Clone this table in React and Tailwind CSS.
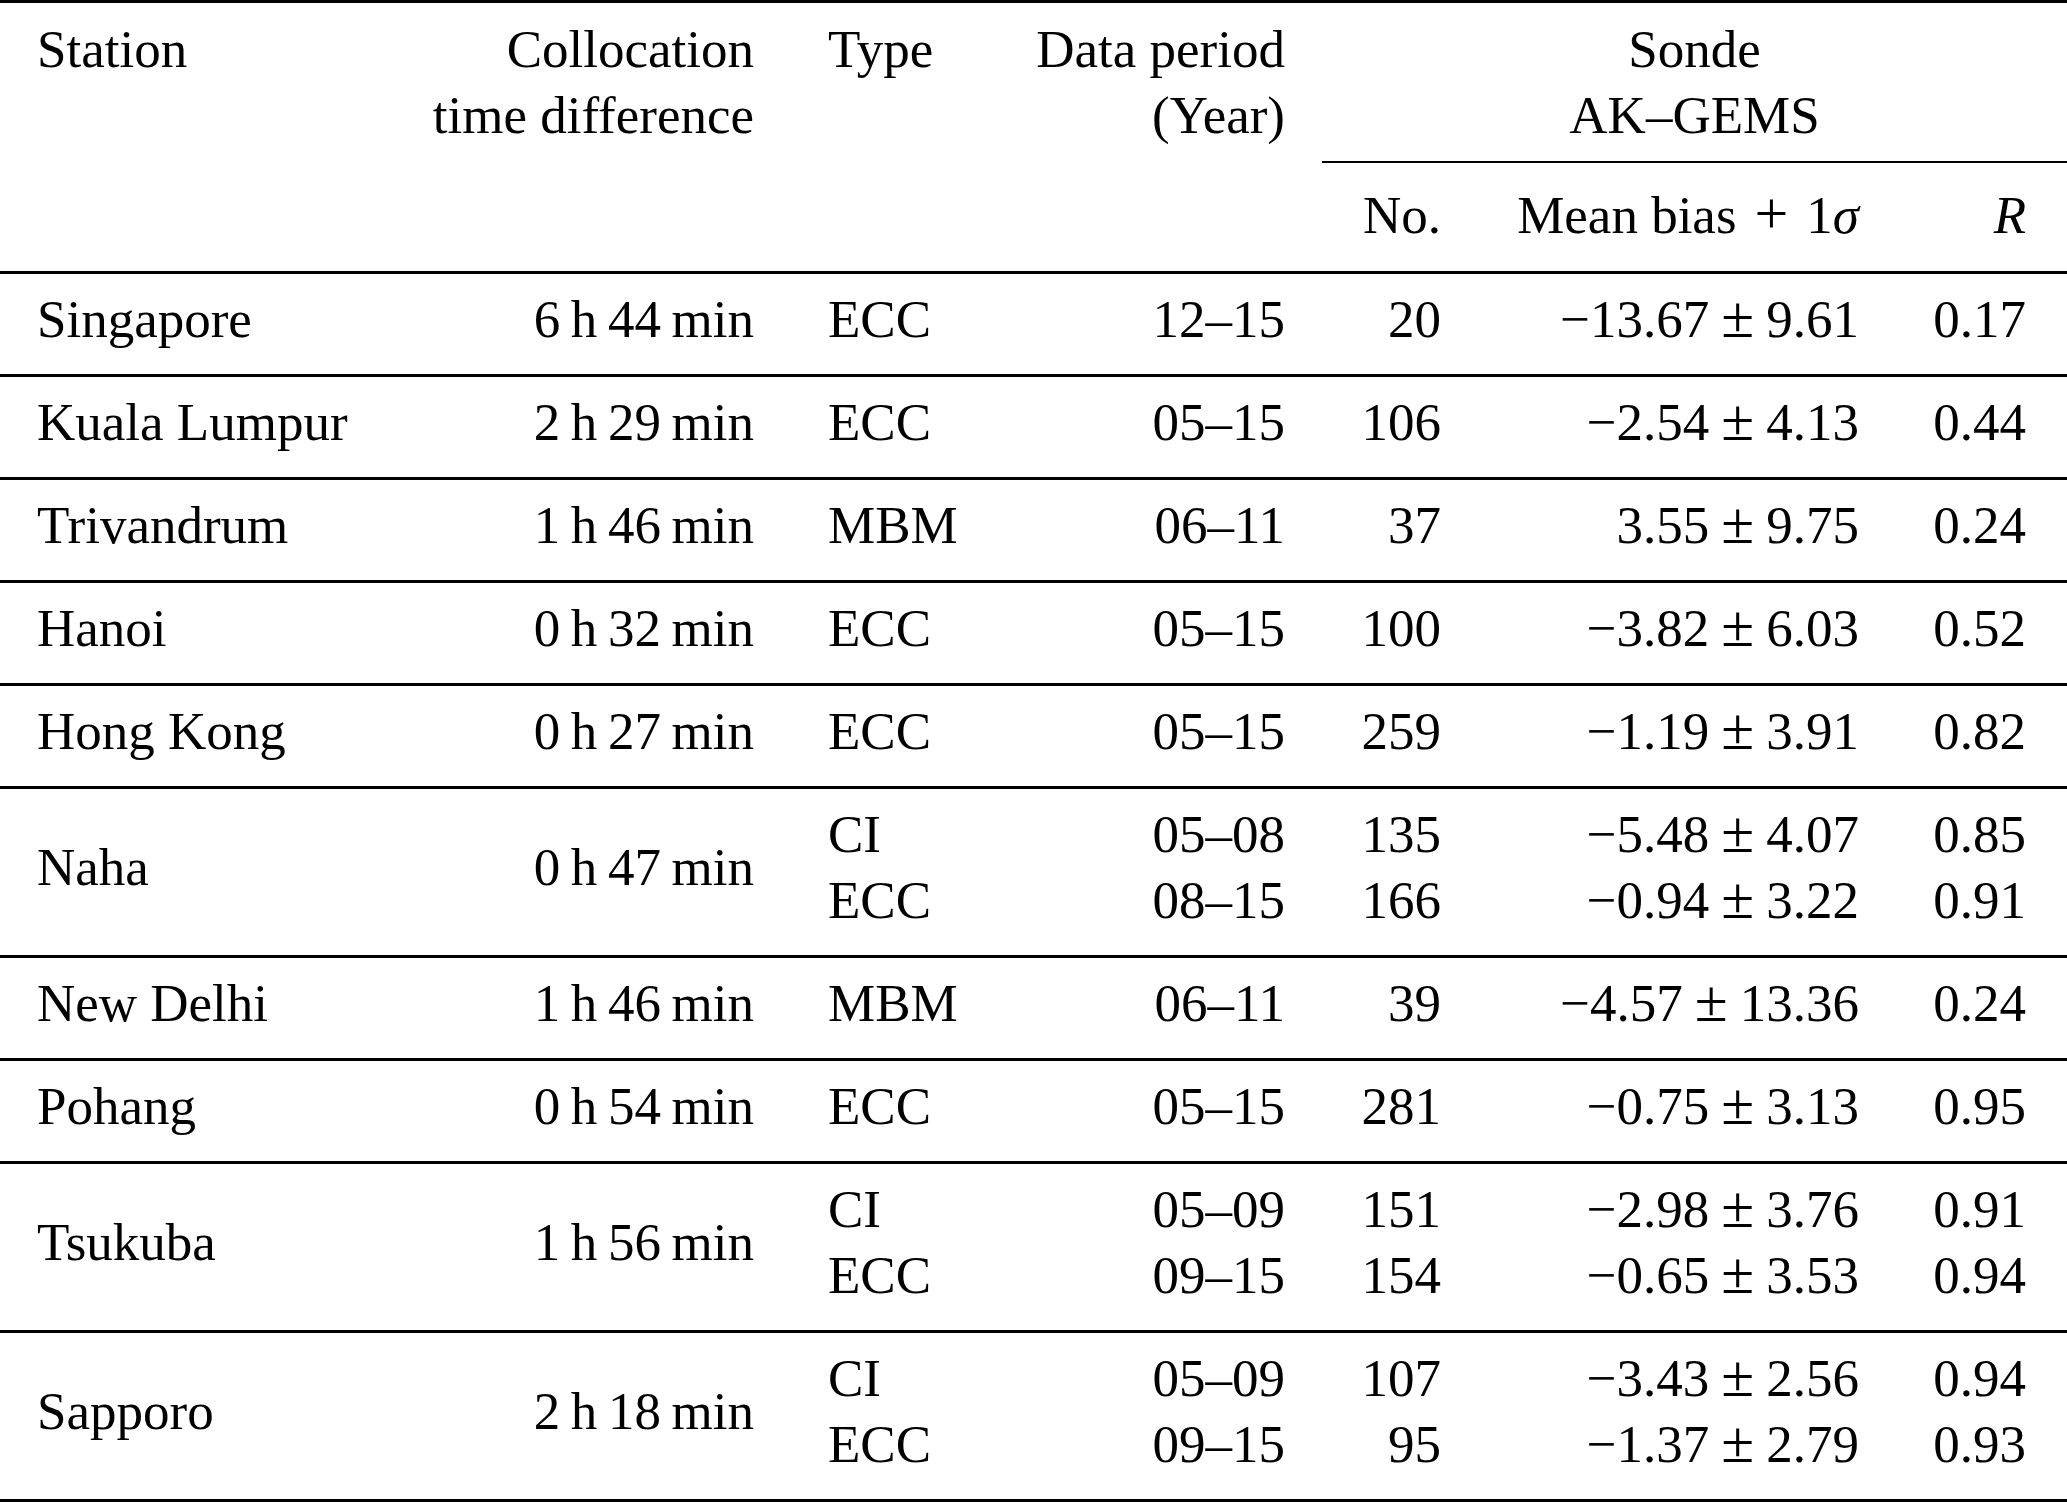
const stations = [
  { name: 'Singapore', diff: ['6', '44'], sub: [['ECC', '12–15', '20', '−13.67', '9.61', '0.17']] },
  { name: 'Kuala Lumpur', diff: ['2', '29'], sub: [['ECC', '05–15', '106', '−2.54', '4.13', '0.44']] },
  { name: 'Trivandrum', diff: ['1', '46'], sub: [['MBM', '06–11', '37', '3.55', '9.75', '0.24']] },
  { name: 'Hanoi', diff: ['0', '32'], sub: [['ECC', '05–15', '100', '−3.82', '6.03', '0.52']] },
  { name: 'Hong Kong', diff: ['0', '27'], sub: [['ECC', '05–15', '259', '−1.19', '3.91', '0.82']] },
  {
    name: 'Naha',
    diff: ['0', '47'],
    sub: [
      ['CI', '05–08', '135', '−5.48', '4.07', '0.85'],
      ['ECC', '08–15', '166', '−0.94', '3.22', '0.91'],
    ],
  },
  { name: 'New Delhi', diff: ['1', '46'], sub: [['MBM', '06–11', '39', '−4.57', '13.36', '0.24']] },
  { name: 'Pohang', diff: ['0', '54'], sub: [['ECC', '05–15', '281', '−0.75', '3.13', '0.95']] },
  {
    name: 'Tsukuba',
    diff: ['1', '56'],
    sub: [
      ['CI', '05–09', '151', '−2.98', '3.76', '0.91'],
      ['ECC', '09–15', '154', '−0.65', '3.53', '0.94'],
    ],
  },
  {
    name: 'Sapporo',
    diff: ['2', '18'],
    sub: [
      ['CI', '05–09', '107', '−3.43', '2.56', '0.94'],
      ['ECC', '09–15', '95', '−1.37', '2.79', '0.93'],
    ],
  },
]

// thin space like LaTeX \,
const TimeDiff = ({ h, m }) => (
  <span>
    {h}
    <span className="ml-[0.2em]">h</span>
    <span className="ml-[0.2em]">{m}</span>
    <span className="ml-[0.2em]">min</span>
  </span>
)

const Bias = ({ mean, sd }) => (
  <span>
    {mean}
    <span className="mx-[0.2em] text-[60px] leading-[0]">±</span>
    {sd}
  </span>
)

const App = () => {
  return (
    <div className="w-[2067px] min-h-[1504px] bg-white text-black font-['Liberation_Serif','Times_New_Roman',serif] text-[53px] leading-[66px]">
      <table className="w-[2067px] table-fixed border-separate border-spacing-0">
        <colgroup>
          <col className="w-[389px]" />
          <col className="w-[402px]" />
          <col className="w-[204px]" />
          <col className="w-[327px]" />
          <col className="w-[156px]" />
          <col className="w-[418px]" />
          <col className="w-[171px]" />
        </colgroup>
        <thead>
          <tr>
            <th rowSpan={2} className="font-normal text-left align-top pl-[37px] pt-[13px] border-t-[3px] border-b-[3px] border-black">
              Station
            </th>
            <th rowSpan={2} className="font-normal text-right align-top pr-[37px] pt-[13px] border-t-[3px] border-b-[3px] border-black whitespace-nowrap">
              Collocation
              <br />
              time difference
            </th>
            <th rowSpan={2} className="font-normal text-left align-top pl-[37px] pt-[13px] border-t-[3px] border-b-[3px] border-black">
              Type
            </th>
            <th rowSpan={2} className="font-normal text-right align-top pr-[37px] pt-[13px] border-t-[3px] border-b-[3px] border-black whitespace-nowrap">
              Data period
              <br />
              (Year)
            </th>
            <th colSpan={3} className="font-normal text-center align-top pt-[13px] pb-[13px] border-t-[3px] border-b-2 border-black">
              Sonde
              <br />
              AK–GEMS
            </th>
          </tr>
          <tr>
            <th className="font-normal text-right pr-[37px] pt-[19px] pb-[23px] border-b-[3px] border-black">No.</th>
            <th className="font-normal text-right pr-[37px] pt-[19px] pb-[23px] border-b-[3px] border-black whitespace-nowrap">
              Mean bias<span className="mx-[0.3em] text-[60px] leading-[0]">+</span>1<span className="italic">σ</span>
            </th>
            <th className="font-normal italic text-right pr-[41px] pt-[19px] pb-[23px] border-b-[3px] border-black">R</th>
          </tr>
        </thead>
        <tbody>
          {stations.map((s, i) => {
            const edge =
              (i > 0 ? ' border-t-[3px]' : '') + (i === stations.length - 1 ? ' border-b-[3px]' : '')
            const cell = 'pt-[12px] pb-[22px] align-middle border-black whitespace-nowrap' + edge
            return (
              <tr key={s.name}>
                <td className={cell + ' text-left pl-[37px]'}>{s.name}</td>
                <td className={cell + ' text-right pr-[37px]'}>
                  <TimeDiff h={s.diff[0]} m={s.diff[1]} />
                </td>
                <td className={cell + ' text-left pl-[37px]'}>
                  {s.sub.map((r) => (
                    <div key={r[0]}>{r[0]}</div>
                  ))}
                </td>
                <td className={cell + ' text-right pr-[37px]'}>
                  {s.sub.map((r) => (
                    <div key={r[0]}>{r[1]}</div>
                  ))}
                </td>
                <td className={cell + ' text-right pr-[37px]'}>
                  {s.sub.map((r) => (
                    <div key={r[0]}>{r[2]}</div>
                  ))}
                </td>
                <td className={cell + ' text-right pr-[37px]'}>
                  {s.sub.map((r) => (
                    <div key={r[0]}>
                      <Bias mean={r[3]} sd={r[4]} />
                    </div>
                  ))}
                </td>
                <td className={cell + ' text-right pr-[41px]'}>
                  {s.sub.map((r) => (
                    <div key={r[0]}>{r[5]}</div>
                  ))}
                </td>
              </tr>
            )
          })}
        </tbody>
      </table>
    </div>
  )
}

export default App
